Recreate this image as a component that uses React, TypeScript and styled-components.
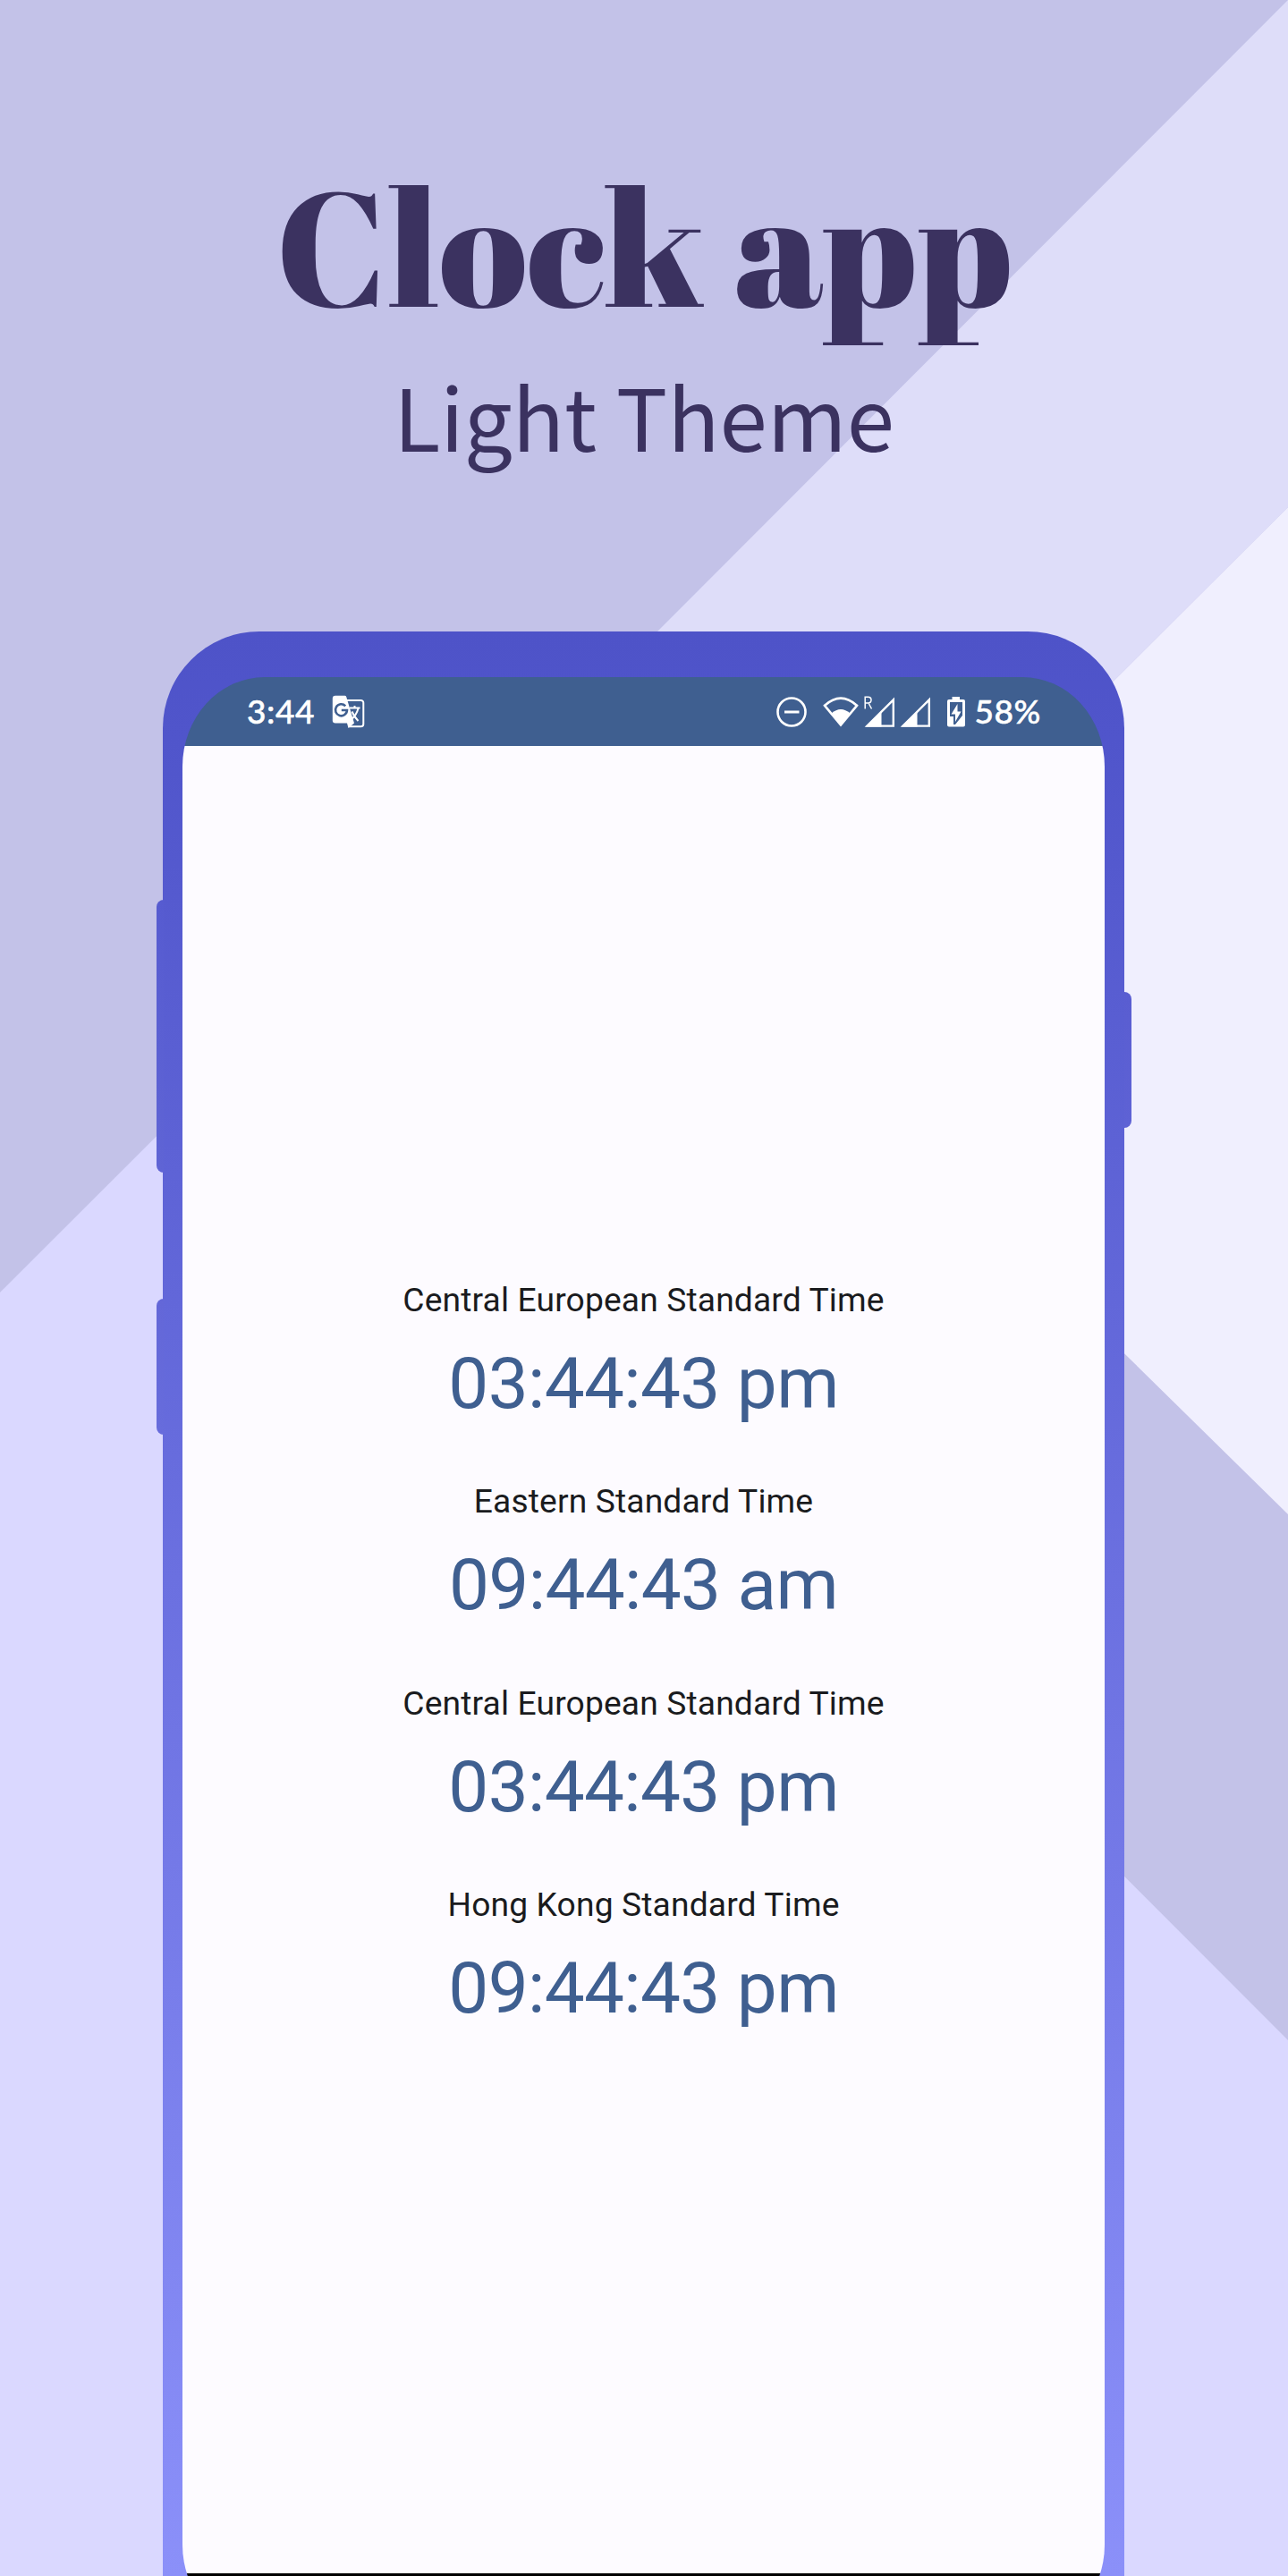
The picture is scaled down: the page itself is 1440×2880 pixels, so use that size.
import React from "react";
import styled, { createGlobalStyle } from "styled-components";

const Global = createGlobalStyle`
  body { margin: 0; }
  * { box-sizing: border-box; }
`;

const Poster = styled.main`
  position: relative;
  width: 1440px;
  height: 2880px;
  overflow: hidden;
  display: flex;
  flex-direction: column;
  align-items: center;
  background: #c3c2e8;
`;

const Backdrop = styled.svg`
  position: absolute;
  inset: 0;
`;

const Heading = styled.header`
  position: relative;
  height: 706px;
  padding-top: 164px;
  display: flex;
  flex-direction: column;
  align-items: center;
  color: #3b3260;
`;

const Title = styled.h1`
  margin: 0;
  height: 220px;
  font: 400 181.5px/220px "Abril Fatface", "Liberation Serif", serif;
  white-space: nowrap;
`;

const Subtitle = styled.p`
  margin: 10px 0 0;
  font: 400 96px/140px "Source Sans Pro", "Noto Sans CJK JP", sans-serif;
  white-space: nowrap;
`;

const Phone = styled.section`
  position: relative;
  width: 1075px;
  height: 2174px;
  flex: none;
  padding: 51px 22px 0;
  border-radius: 108px 108px 0 0;
  background: linear-gradient(#4e53c8 0, #5055cb 120px, #8b90f9 2174px);
  margin-right: 1px;
`;

const SideButton = styled.span<{ $side: "left" | "right"; $top: number; $height: number; $color: string }>`
  position: absolute;
  ${(p) => p.$side}: -7.5px;
  top: ${(p) => p.$top}px;
  width: 8px;
  height: ${(p) => p.$height}px;
  border-radius: ${(p) => (p.$side === "left" ? "8px 0 0 8px" : "0 8px 8px 0")};
  background: ${(p) => p.$color};
`;

const Screen = styled.div`
  height: 2188px;
  overflow: hidden;
  display: flex;
  flex-direction: column;
  border-radius: 92px / 100px;
`;

const StatusBar = styled.div`
  height: 77px;
  flex: none;
  padding: 0 71px 0 72px;
  display: flex;
  align-items: center;
  background: #3f5f90;
  color: #fff;
`;

const StatusText = styled.span<{ $gap?: number }>`
  font: 500 37px/75px "Google Sans", Lato, sans-serif;
  letter-spacing: 0.6px;
  -webkit-text-stroke: 0.5px #fff;
  height: 77px;
  margin-left: ${(p) => p.$gap ?? 0}px;
  white-space: nowrap;
`;

const Icon = styled.svg<{ $gap?: number }>`
  flex: none;
  margin-left: ${(p) => p.$gap ?? 0}px;
`;

const Spacer = styled.span`
  flex: 1;
`;

const Clocks = styled.div`
  flex: none;
  height: 2043px;
  padding-top: 594px;
  display: flex;
  flex-direction: column;
  align-items: center;
  background: #fdfbff;
`;

const Clock = styled.div`
  height: 225.4px;
  display: flex;
  flex-direction: column;
  align-items: center;
  white-space: nowrap;
`;

const Zone = styled.span`
  font: 400 37.2px/50px Roboto, sans-serif;
  letter-spacing: 0.15px;
  color: #1a1b1e;
`;

const Time = styled.span`
  margin-top: 19px;
  font: 400 80px/100px Roboto, sans-serif;
  letter-spacing: -0.65px;
  color: #3f5f90;
`;

const NavBar = styled.div`
  flex: 1;
  background: #000;
`;

const zones = [
  ["Central European Standard Time", "03:44:43 pm"],
  ["Eastern Standard Time", "09:44:43 am"],
  ["Central European Standard Time", "03:44:43 pm"],
  ["Hong Kong Standard Time", "09:44:43 pm"],
];

const TranslateIcon = () => (
  <Icon $gap={19} width="37" height="38" viewBox="0 0 37 38" fill="none">
    <path d="M17 6H32.5a2.8 2.8 0 0 1 2.8 2.8V32.5a2.8 2.8 0 0 1-2.8 2.8H19" stroke="#fff" strokeWidth="2" />
    <path d="M4 .8H14.5Q15.700 .8 16.200 2L25 31.500L18.500 37L17 31.500H4Q.8 31.500 .8 28.500V4Q.8 .8 4 .8Z" fill="#fff" />
    <path d="M15.200 12.300A6.500 6.500 0 1 0 17 17H10.800" stroke="#3f5f90" strokeWidth="2.600" />
    <path d="M20 14.600H31.500M25.500 12v2.600M29.500 15Q27.500 23 21 28M22.500 18.500Q25 24.500 29.500 29" stroke="#fff" strokeWidth="2" />
  </Icon>
);

const DndIcon = () => (
  <Icon width="34" height="34" viewBox="0 0 34 34" fill="none" stroke="#fff">
    <circle cx="17" cy="17" r="15.500" strokeWidth="2.600" />
    <path d="M9 17H25.500" strokeWidth="3" />
  </Icon>
);

const WifiIcon = () => (
  <Icon $gap={18} width="40" height="34" viewBox="0 0 40 34">
    <path d="M2 9.800Q20-6.500 38 9.800L20 31.500Z" fill="none" stroke="#fff" strokeWidth="2.600" />
    <path d="M9.500 18.500Q20 9.500 30.500 18.500L20 32Z" fill="#fff" />
  </Icon>
);

const SignalIcon = ({ roaming = false }: { roaming?: boolean }) => (
  <Icon $gap={5} width={roaming ? 36 : 35} height="36" viewBox={roaming ? "-2 -1 36 36" : "-1 -1 35 36"}>
    <path d="M2.500 32.600H31.800V3.300Z" fill="none" stroke="#fff" strokeWidth="2.400" />
    <path d="M1 33.500L18.500 16V33.500Z" fill="#fff" />
    {roaming && <path d="M.2 13.500V.2H3.500Q7 .2 7 3.600T3.500 7H.2M4 7L7.500 13.500" fill="none" stroke="#fff" strokeWidth="1.500" />}
  </Icon>
);

const BatteryIcon = () => (
  <Icon $gap={17} width="22" height="36" viewBox="0 0 22 36">
    <path d="M6.500 1H15V4H19Q21 4 21 6V32.500Q21 34.500 19 34.500H3Q1 34.500 1 32.500V6Q1 4 3 4H6.500Z" fill="#fff" />
    <path d="M4 7H18V22L10 32H8V23H4Z" fill="#3f5f90" />
    <path d="M12.500 9L5.500 20.500H10V29L16.500 17.500H12.500Z" fill="#fff" />
  </Icon>
);

export default function App() {
  return (
    <Poster>
      <Global />
      <Backdrop width="1440" height="2880" viewBox="0 0 1440 2880">
        <path d="M1440 567V1693L735 1000V1270Z" fill="#f0effe" />
        <path d="M0 1445L720 726V1560L1440 2281V2880H0Z" fill="#dad8ff" />
        <path d="M1440 0V567L735 1270V706Z" fill="#deddf9" />
      </Backdrop>
      <Heading>
        <Title>Clock app</Title>
        <Subtitle>Light Theme</Subtitle>
      </Heading>
      <Phone>
        <SideButton $side="left" $top={300} $height={305} $color="linear-gradient(#565bd0, #5f64d5)" />
        <SideButton $side="left" $top={746} $height={152} $color="linear-gradient(#6367d8, #676cdc)" />
        <SideButton $side="right" $top={403} $height={152} $color="linear-gradient(#595dd1, #5e62d5)" />
        <Screen>
          <StatusBar>
            <StatusText>3:44</StatusText>
            <TranslateIcon />
            <Spacer />
            <DndIcon />
            <WifiIcon />
            <SignalIcon roaming />
            <SignalIcon />
            <BatteryIcon />
            <StatusText $gap={9}>58%</StatusText>
          </StatusBar>
          <Clocks>
            {zones.map(([zone, time], i) => (
              <Clock key={i}>
                <Zone>{zone}</Zone>
                <Time>{time}</Time>
              </Clock>
            ))}
          </Clocks>
          <NavBar />
        </Screen>
      </Phone>
    </Poster>
  );
}
